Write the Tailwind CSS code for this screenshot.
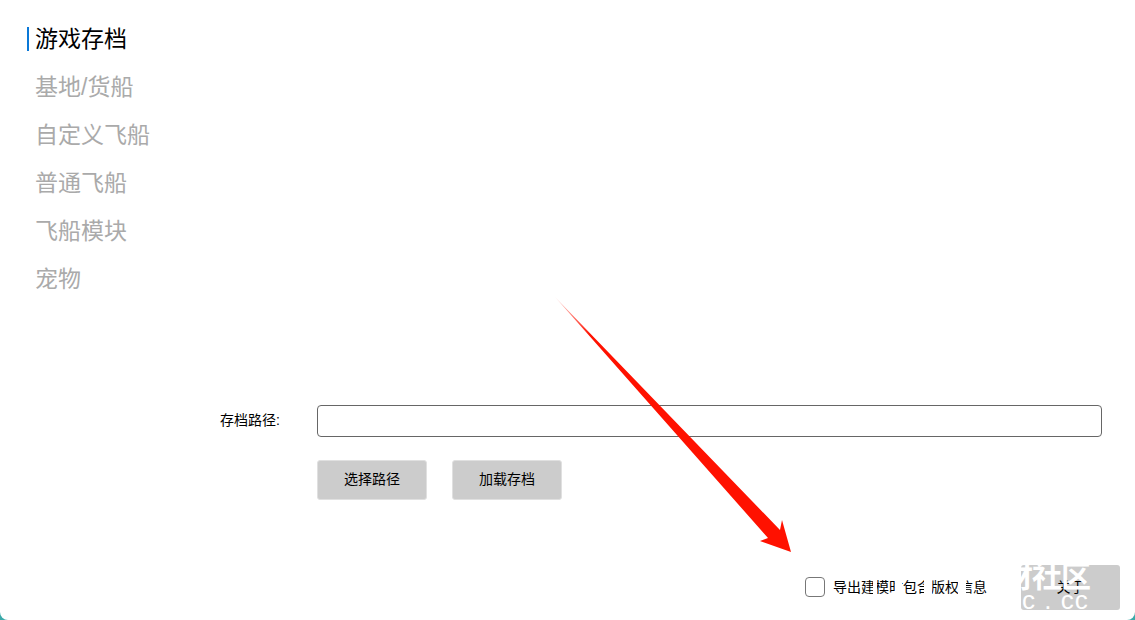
<!DOCTYPE html>
<html lang="zh-CN">
  <head>
    <meta charset="UTF-8" />
    <title>存档工具</title>
    <script src="https://cdn.jsdelivr.net/npm/@tailwindcss/browser@4"></script>
  </head>
  <body class="bg-[#3aa9a9] font-['Liberation_Sans','Noto_Sans_CJK_SC',sans-serif] overflow-hidden">
    <div class="relative h-[620px] bg-white rounded-b-[8px] overflow-hidden">
      <!-- Tabs -->
      <ul class="pt-[15px] pl-[27px] text-[23px] text-[#aaaaaa]">
        <li class="h-[48px] flex items-center text-black">
          <span class="border-l-2 border-[#0a78d7] pl-[6px] leading-[24px]">游戏存档</span>
        </li>
        <li class="h-[48px] flex items-center pl-[8px]">基地/货船</li>
        <li class="h-[48px] flex items-center pl-[8px]">自定义飞船</li>
        <li class="h-[48px] flex items-center pl-[8px]">普通飞船</li>
        <li class="h-[48px] flex items-center pl-[8px]">飞船模块</li>
        <li class="h-[48px] flex items-center pl-[8px]">宠物</li>
      </ul>

      <!-- Save path form -->
      <div class="mt-[102px] pl-[220px] pr-[33px] text-[14px] text-black">
        <div class="flex items-center h-[32px]">
          <label class="w-[97px] pb-[2px]">存档路径:</label>
          <input class="flex-1 h-[32px] border border-[#666666] rounded-[4px] bg-white" />
        </div>
        <div class="flex gap-[25px] mt-[23px] pl-[97px]">
          <button class="w-[110px] h-[40px] pb-[2px] bg-[#cccccc] border border-[#e0e0e0] rounded-[3px]">选择路径</button>
          <button class="w-[110px] h-[40px] pb-[2px] bg-[#cccccc] border border-[#e0e0e0] rounded-[3px]">加载存档</button>
        </div>
      </div>

      <!-- Footer -->
      <div class="flex items-center justify-end mt-[65px] pr-[15px] h-[45px] text-[14px] text-black">
        <span class="w-[20px] h-[20px] mb-px border border-[#777777] rounded-[4px] bg-white"></span>
        <span class="relative ml-[8px]">
          导出建模时包含版权信息
          <!-- watermark strokes cutting through the label -->
          <i class="absolute left-[40px] top-0 w-[4px] h-full bg-white"></i>
          <i class="absolute left-[62px] top-0 w-[7px] h-full bg-white"></i>
          <i class="absolute left-[91px] top-0 w-[8px] h-full bg-white"></i>
          <i class="absolute left-[125px] top-0 w-[8px] h-full bg-white"></i>
        </span>
        <button class="ml-[34px] w-[99px] h-[45px] bg-[#cccccc] rounded-[3px]">关于</button>
      </div>

      <!-- Watermark over the footer -->
      <div class="absolute left-[1003px] top-[560px] text-white font-bold text-[30px] leading-[34px] tracking-[-1px] whitespace-nowrap">
        <div>财社区</div>
        <div class="ml-[19px] mt-[-5px] text-[26px] leading-[22px] font-normal tracking-[1px]">c . cc</div>
      </div>

      <!-- Red arrow annotation -->
      <svg class="absolute left-0 top-0 pointer-events-none" width="1135" height="620" viewBox="0 0 1135 620">
        <defs>
          <linearGradient id="arrowFade" gradientUnits="userSpaceOnUse" x1="555" y1="297" x2="590" y2="335">
            <stop offset="0" stop-color="#ff1100" stop-opacity="0.15" />
            <stop offset="1" stop-color="#ff1100" />
          </linearGradient>
        </defs>
        <polygon fill="url(#arrowFade)" points="555,297 780,530 782,520 791,552 760,541 768,538" />
      </svg>
    </div>
  </body>
</html>
